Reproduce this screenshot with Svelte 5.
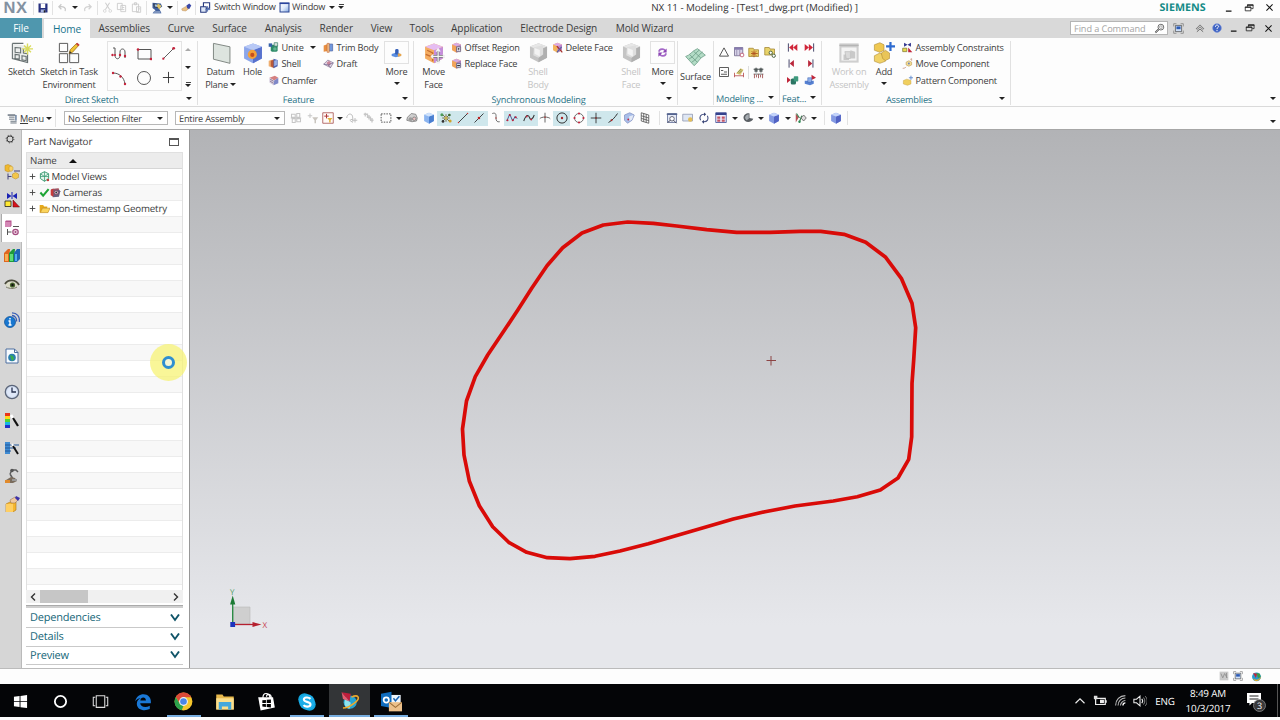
<script>
	// icon shapes, all drawn on a 16x16 grid
	const cube = (top, left, right) => `<path d="M8 1l6.5 2.5v8.500L8 15.500 1.500 12V3.500z" fill="${left}"/><path d="M8 6l6.500-2.500V12L8 15.500z" fill="${right}"/><path d="M8 1l6.500 2.500L8 6 1.500 3.500z" fill="${top}"/>`;
	const dot = (x, y, r = 1.2, c = '#c4233c') => `<circle cx="${x}" cy="${y}" r="${r}" fill="${c}"/>`;
	const line = (d, c = '#444', w = 1) => `<path d="${d}" fill="none" stroke="${c}" stroke-width="${w}"/>`;

	const icons = {
		save: '<path d="M2 2h12v12H2z" fill="#27307f"/><path d="M5 2h6v6H5z" fill="#fff"/><path d="M5 10h6v4H5z" fill="#a8b5df"/><path d="M9 11h2v3H9z" fill="#222"/>',
		undo: line('M13 13c2-5-2-8-9-7M7 2L3 6l4 4', '#c9c9c9', 2),
		redo: line('M3 13c-2-5 2-8 9-7M9 2l4 4-4 4', '#d2d2d2', 2),
		cut: line('M5 1l6 10M11 1L5 11', '#cfcfcf', 1.5) + '<circle cx="4" cy="13" r="2" fill="none" stroke="#cfcfcf"/><circle cx="12" cy="13" r="2" fill="none" stroke="#cfcfcf"/>',
		copy: line('M2 2h7v9H2zM7 5h7v9H7zM9 8h3M9 11h3', '#cbcbcb', 1.3),
		paste: line('M2 3h9v11H2zM5 1h3v3H5zM8 7h6v8H8zM10 10h3', '#cbcbcb', 1.3),
		camera: '<path d="M2 1l11 1 2 4-4 3 3 6H2l4-4-4-3z" fill="#3f5f9c"/><path d="M3 2l7 1v5L4 7z" fill="#2c3646"/><path d="M5 3l4 .5v3L5 6z" fill="#a6c6ea"/><path d="M9 2l5 3-3 5-3-4z" fill="#dfc468"/><path d="M4 12h8l1 3H3z" fill="#7d93bd"/>',
		eraser: '<path d="M1 10l7-4 4 3-5 4-5-.500z" fill="#edc384" stroke="#a87b48" stroke-width=".6"/><path d="M8 5l4-3 3 3-3 5-3-1z" fill="#3a48a8"/>',
		switch: line('M5 1h9v8H5z', '#26387e', 1.6) + '<path d="M1 7h8v8H1z" fill="#dce6f6" stroke="#26387e" stroke-width="1.500"/>' + line('M11 6v8M8 11h7', '#5474b8', 1.4),
		window: '<defs><linearGradient id="wg" x1="0" y1="0" x2="1" y2="1"><stop offset="0" stop-color="#fff"/><stop offset=".5" stop-color="#dfeafb"/><stop offset="1" stop-color="#7fa4dd"/></linearGradient></defs><path d="M1.500 1.500h13v13h-13z" fill="url(#wg)" stroke="#2c4794" stroke-width="1.500"/><path d="M1 1h14v2H1z" fill="#2a449e"/>',
		sketch: '<path d="M1 1l12 2v12L1 12z" fill="#eceeed"/>' + line('M1 1h8M1 1v11l11 3V9M3 4l4 .4v3.600L3 7.500zM9 5v3l3 .5M3 9l3 .4v3L3 12zM8 10l3 .6v3L8 13z', '#687172', .8) + line('M12 1v8M8 5h8M9.500 2.500l5 5M14.500 2.500l-5 5', '#d9db5c', 1),
		task: line('M1 1h6v6H1zM1 8.500h6V15H1zM8.500 8.500H15V15H8.500z', '#555', .7) + '<path d="M8 8.500l1-3L13.500 1 15 2.500l-4.500 5z" fill="#f0c434" stroke="#a4751d" stroke-width=".6"/><path d="M13 1.500L14 .5 15.700 2l-1 1z" fill="#c43d3d"/><path d="M8 8.500l.6-2 1.300 1.400z" fill="#333"/>',
		studio: line('M2 2h2v7c0 5 5 5 5 0V6c0-4 5-4 5 0v6', '#555') + dot(1.500, 9) + dot(4, 9, 1) + dot(9, 9) + dot(14, 10),
		rect: line('M2 3.500h13v9.500H2z', '#555') + dot(2, 3.500, 1.3) + dot(15, 13, 1.3),
		line: line('M2 14L14 2', '#555') + dot(2.500, 13.500) + dot(13.500, 2.500, 1.5),
		arc: line('M2 3c6 0 11 4 12 11', '#555') + dot(2, 3) + dot(9.500, 6.500) + dot(14, 14),
		circle: '<circle cx="8" cy="8" r="6.500" fill="none" stroke="#444" stroke-width=".9"/>',
		plus: line('M8 2v12M2 8h12', '#333', 1),
		datum: '<path d="M2.500 1L14.500 3.500V15.500L2.500 12.500z" fill="#dde4df" stroke="#7e8581" stroke-width=".7"/>',
		hole: cube('#b8c9f6', '#8ca6ea', '#5872cd') + '<circle cx="7.500" cy="9" r="3.300" fill="#f4a13a"/><circle cx="7.500" cy="9.400" r="1.500" fill="#c84e1e"/>',
		unite: '<rect x="4" y="4" width="10" height="10" rx="2" fill="#2e8b68"/><path d="M1 2h5v5H1z" fill="#3561a8"/><path d="M9 1h5v5H9z" fill="#d6e2de" stroke="#3b7f67"/><circle cx="10" cy="10" r="2.500" fill="#63b593"/>',
		shell: '<path d="M1 4l6-2v12l-6-2z" fill="#efae70"/><path d="M4 4l5-2v13l-5-3z" fill="#b85a3c"/><path d="M8 1l6 2v9l-6 3z" fill="#4b62b4"/><path d="M9 4l4-1v7l-4 2z" fill="#9db3e8"/>',
		chamfer: '<path d="M2 4l8-3 5 3-6 4z" fill="#d58080"/><path d="M2 4l7 4-1 7-6-4z" fill="#d4cadc"/><path d="M9 8l6-4v8l-7 3z" fill="#7f88c8"/>' + line('M3 6l5 3M3 9l5 3', '#79627c'),
		trim: '<path d="M1 5l6-2v10l-6 1z" fill="#e88f42"/><path d="M8 3h6v10H8z" fill="#7198dd" stroke="#4a63a4"/><path d="M6 2h3v13H6z" fill="#f2c795" stroke="#c05d26" stroke-width=".8"/>',
		draft: '<path d="M1 9l6-6 8 4-4 7z" fill="#e4dde9" stroke="#846f91"/><path d="M5 7l4-3 3 4-4 4z" fill="#c8849a"/>' + line('M1 9l7 1 7-3M8 10l3 4', '#6f648d'),
		moreBody: '<path d="M1 10l7-2 6 2v3l-7 2-6-2z" fill="#5b8fe2"/><rect x="6" y="3" width="5" height="8" rx="2" fill="#3560b8"/><path d="M10 9l5 1v3l-5 1z" fill="#e7a64d"/>',
		moveFace: cube('#e6bdf2', '#f4ad62', '#c48ddc') + line('M3 6l4 2v6M2 9l5 2', '#c76e31') + line('M11 6v9M6.500 10.500h9', '#777', 2) + line('M11 5.500v10M6 10.500h10M9.500 7L11 5l1.500 2M9.500 14l1.500 2 1.500-2M7.500 9L6 10.500 7.500 12M14.500 9l1.500 1.500-1.500 1.500', '#f4f4f4', .9),
		offset: cube('#d9abe3', '#f2a45a', '#b58cc6') + '<path d="M8 7h6v7H8z" fill="#ddd9e8" stroke="#5f546d"/>' + line('M11 12V9M9.500 10.500L11 9l1.500 1.500', '#333'),
		replace: cube('#d6a9df', '#f2a45a', '#a87ebd') + '<path d="M8 8h6v6H8z" fill="#cfd8e9" stroke="#5a5a7c"/>' + line('M9 11h4', '#333', 1.6),
		delete: cube('#dca8e5', '#f4b45c', '#bd84cf') + line('M7 6l8 9', '#a5302c', 1.8) + line('M14 7l-7 8', '#56639b', 1.8),
		shellGrey: cube('#e7e7e7', '#c4c4c4', '#b0b0b0') + '<path d="M4.500 4l7-1.500v7L8 12 4 10z" fill="#dedede"/><path d="M5 4.500l4 1.500v5L5 9z" fill="#f3f3f3"/>',
		moreSync: line('M3 7c0-5 8-5 9-1M13 9c0 5-8 5-9 1', '#a468c7', 2.4) + '<path d="M14 2v6H8zM2 14V8h6z" fill="#8c46b5"/>',
		surface: '<path d="M.5 8C4 7 5 4 9.500 2l6 5c-4 1.500-5 5-8.500 8z" fill="#b3dcc6"/>' + line('M.5 8C4 7 5 4 9.500 2l6 5c-4 1.500-5 5-8.500 8zM3 10c4-2 5-5 8-7M5 12.500c4-2 5-6 8.500-8M3.500 6.500l6 6M6.500 4l5.500 5', '#6a9c84', .6),
		triangle: line('M8 2.500l6 11H2z', '#333', 1.1),
		table: '<path d="M2 2h11v11H2z" fill="#d7d2e8" stroke="#6a6186"/><path d="M2 2h11v3H2z" fill="#877bb0"/>' + line('M5 5v8M9 5v8', '#8d84a5') + '<circle cx="12" cy="12" r="2.500" fill="#fff" stroke="#b94763"/>',
		folderStar: '<path d="M1 3h6l1 2h6v9H1z" fill="#e6cc62" stroke="#a18431"/>' + line('M8 6v9M4 10h9M5 7l6 6M11 7l-6 6', '#b0531f', 1.2),
		folderLink: '<path d="M1 2h6l1 2h6v8H1z" fill="#e8d369" stroke="#a18431"/><circle cx="9" cy="9" r="2.200" fill="#fff" stroke="#4c6340" stroke-width="1.300"/><circle cx="13" cy="13" r="2.200" fill="#fff" stroke="#4c6340" stroke-width="1.300"/>',
		note: line('M2 2h12v12H2zM4 6h3M4 11h8M8 8h4', '#3c3c3c', 1.1),
		measure: '<path d="M4 10l6-7 4 2-4 7z" fill="#e3c874"/>' + line('M2 9v6M14 9v6M2 13h12', '#b13c3c') + line('M6 9l5-5M8 10l4-4', '#557c4c'),
		weight: '<path d="M3 3h4v4H3zM9 3h4v4H9z" fill="#6c7373"/>' + line('M2 4h12M5 2v6M11 2v6', '#4c5353', 1.2) + line('M2 10h12', '#555', 1) + line('M3 10v5M5.500 11v3M8 10v5M10.500 11v3M13 10v5', '#9a4545', 1),
		first: line('M2 2v12', '#33335a', 1.3) + '<path d="M9 3v10L3 8zM15 3v10L9 8z" fill="#d0263a"/>',
		last: line('M14 2v12', '#33335a', 1.3) + '<path d="M1 3v10l6-5zM7 3v10l6-5z" fill="#d0263a"/>',
		prev: line('M3 2v12', '#33335a', 1.3) + '<path d="M10 3v10L4 8z" fill="#b9263a"/>',
		next: line('M13 2v12', '#33335a', 1.3) + '<path d="M6 3v10l6-5z" fill="#b9263a"/>',
		playGreen: '<path d="M0 4v8l5-4z" fill="#c0263a"/><rect x="5" y="6" width="7" height="8" rx="2" fill="#2b7563"/><rect x="9" y="3" width="6" height="7" rx="1" fill="#3e997d"/>',
		playBlue: '<path d="M10 1v7l6-3z" fill="#c0263a"/><path d="M1 9h12v4l-5 2-7-2z" fill="#5580d2"/><path d="M5 5h5v6H5z" fill="#8fb0ea" stroke="#3b5fae" stroke-width=".7"/>',
		work: '<path d="M1 1h14v14H1z" fill="#cfcfcf"/><path d="M2.500 4h11v9.500h-11z" fill="#f4f4f4"/><path d="M4 9h4v4H4zM9 6l3.500 1v5L9 12z" fill="#c9c9c9"/><path d="M5 7h4v5H6z" fill="#dadada" stroke="#bbb" stroke-width=".5"/>' + line('M1 2.500h14', '#b5b5b5', 1),
		add: '<path d="M1 2l4-1.500L8 2v4L5 7.500 1 6z" fill="#efc851" stroke="#a8842d" stroke-width=".4"/><path d="M1 10l4-2 4 2v4l-4 1.500L1 14z" fill="#f1d267" stroke="#a8842d" stroke-width=".4"/><path d="M6 8l3-2 3 2v4l-3 1.500L7 12z" fill="#e9c558" stroke="#a8842d" stroke-width=".4"/>' + line('M12.700 0v6.500M9.500 3.200h6.500', '#2d6bd0', 1.6),
		constraint: '<path d="M3 1v6l5-3 5 3V1L8 4z" fill="#31358e"/><path d="M1 9h6v5H1z" fill="#e8d94d" stroke="#77702a"/><path d="M9 8v7h6z" fill="#c0263a"/>',
		moveComp: '<path d="M6 6l4-2 4 2v4l-4 2-4-2z" fill="#f3dc94" stroke="#b8944b" stroke-width=".8"/>' + line('M1 15c3 0 4-1 5-2M12 2l2-1v3', '#c0806a') + dot(10, 8, 1.4, '#6d84bb'),
		patternComp: '<path d="M2 8l5-2 6 2v5l-5 2-6-2z" fill="#f0cf5e" stroke="#c29a36" stroke-width=".6"/>' + line('M13 1v6M10 4h6', '#5c88cd', 1.3),
		menu: '<path d="M1 2h11v2H1z" fill="#5c6774"/>' + line('M3 6h8M3 9h8M5 12h9M5 14.500h9', '#5c6774', 1.3) + line('M13 3v8', '#36557e', 1.6),
		ghost: line('M2 3h5v4H2zM9 2h4v5H9zM3 9h4v5H3zM9 9h5v4H9zM1 8h14', '#c6c6c6', 1.4),
		ghostFilter: line('M1 5h6M4 2v6', '#c8c8c8', 1.4) + '<path d="M7 7h8l-3 4v4h-2v-4z" fill="#c9c5bf"/>',
		filter: '<path d="M1 1h14v14H1z" fill="#fffaf7" stroke="#a04444"/>' + line('M3 5.500h6M6 2.500v6', '#b03737', 1.3) + '<path d="M7 8h7l-2.500 3v3h-2v-3z" fill="#e0b13b"/>',
		ghostMove: line('M1 8c0-6 8-8 8 0v5M9 10h-3M5 11l4 3M9 11h6M12 8v6', '#bdbdbd', 1.3),
		ghostSteps: line('M1 3h5v4h4v4h4M3 1v5M8 4v6M12 8v6', '#c6c6c6', 1.7),
		dashed: '<rect x="1.500" y="2.500" width="13" height="11" fill="none" stroke="#444" stroke-width="1.200" stroke-dasharray="2 1.500"/>',
		wire: '<path d="M1 11l1-4 5-5 6 1 2 5-1 4-6 1z" fill="#cfcfcf" stroke="#777"/><circle cx="6" cy="9.500" r="2.600" fill="#9d9d9d"/><circle cx="11" cy="9" r="2.300" fill="#ecc4c4" stroke="#777"/>',
		blueCube: cube('#cfe2fb', '#8cb5f0', '#4a7fd0'),
		violetCube: cube('#c4d4fa', '#8399e2', '#5263c4'),
		snap: line('M8 3v10M3 8h10M4 4l8 8M12 4l-8 8', '#6d633a', 1.2) + dot(2.500, 3.500, 2, '#4c9a58') + dot(13.500, 12, 2, '#cfa329') + dot(12.500, 4, 1.8, '#3c6b35') + dot(4, 12.500, 1.8, '#333') + dot(8, 8, 2, '#c9b24a'),
		snapLine: line('M2 14L14 2', '#222', 1.1) + dot(14, 2, 1, '#c33') + dot(2, 14, 1, '#c33'),
		snapMid: line('M2 14L14 2', '#222', 1.1) + dot(8, 8, 1.7, '#b22'),
		hook: line('M3 2c6-2 5 3 5 6s1 6 5 5', '#555', 1.1) + dot(8, 8, .9, '#b33'),
		poly: line('M1 12l4-9 4 9 3-6 3 3', '#2f3a7e', 1.1) + dot(5, 4, 1.3) + dot(9, 11, 1.3) + dot(2, 11, 1.3) + dot(13, 7, 1.3),
		spline: line('M1 12c4-11 7-7 8-4s4 2 6-4', '#333', 1.4) + dot(5, 6, 1.2) + dot(11, 10, 1.2),
		cross: line('M8 1v13M1 9c2-3 12-3 14 0', '#555', 1.2) + dot(8, 7, 1, '#b33'),
		center: '<circle cx="8" cy="8" r="6.800" fill="none" stroke="#222" stroke-width="1.200"/>' + dot(8, 8, 1.6, '#a22'),
		quadrant: '<circle cx="8" cy="8" r="6" fill="none" stroke="#555" stroke-width="1.100"/>' + dot(8, 2, 1.4) + dot(8, 14, 1.4) + dot(2, 8, 1.4) + dot(14, 8, 1.4),
		plusSnap: line('M8 1v14M1 8h14', '#222', 1.1) + dot(8, 8, 1, '#a22'),
		onCurve: line('M2 14c5-3 8-6 12-12', '#222', 1.2) + dot(6, 11, 1.3, '#a22'),
		faceSnap: '<path d="M2 4l7-3 6 3-3 7-6 4-4-4z" fill="#a9bfea" stroke="#8593c2"/><path d="M8 6l6-2-2 6-3 2z" fill="#e4eaf6"/>' + dot(7, 10, 1.2),
		grid: line('M3 1l10 3v11L3 12zM6.300 2v11M9.600 3v11M3 5l10 3M3 8.500l10 3', '#555', 1.1),
		fit: '<path d="M2 2h12v12H2z" fill="#e5eaf6" stroke="#55648f"/><path d="M1 2h14v2H1z" fill="#55648f"/><circle cx="8" cy="9" r="3" fill="#fff" stroke="#445" />' + line('M10 11l4 4M6 11l-4 3', '#445', 1.2),
		zoomWin: '<path d="M1 3h13v9H1z" fill="#dfe7f4" stroke="#8993ac"/>' + dot(11, 10, 3, '#e3bd58'),
		rotate: line('M3.500 11C1 6 4 3 8 3M12.500 5c2.500 5-.5 8-4.500 8', '#4a5585', 1.5) + '<path d="M8 .5l3 2.500-3 2.500zM8 10.500L5 13l3 2.500z" fill="#3a4575"/>',
		views: '<path d="M1 1h14v13H1z" fill="#eef" stroke="#34428d"/><path d="M1 1h14v3H1z" fill="#34428d"/><path d="M3 6h4v3H3zM9 6h4v3H9zM3 10h4v3H3zM9 10h4v3H9z" fill="#c55664"/>',
		section: '<path d="M2 8c0-5 5-7 8-6v6l5 1c-1 5-12 7-13-1z" fill="#5a5f64"/><path d="M4 8c0-3 3-5 5-5v6l-3 2z" fill="#a5abb0"/>',
		path: '<path d="M1 2l4 5-4 7z" fill="#b85258"/>' + line('M2 2l4 6M6 13l3-8', '#3a8252', 1.5) + '<path d="M11.500 4l3.500 4-3.500 4L8 8z" fill="#ddd" stroke="#555"/>' + dot(6, 13, 1.6, '#2f8a55'),
		search: '<circle cx="10" cy="6" r="4.200" fill="none" stroke="#444" stroke-width="1.100"/><circle cx="10" cy="6" r="2" fill="none" stroke="#666" stroke-width=".8"/>' + line('M7 9l-5 5', '#444', 2.4) + line('M7 9l-5 5', '#fff', .8),
		screen: line('M1 5V1h4M11 1h4v4M15 11v4h-4M5 15H1v-4', '#777', 1) + '<path d="M3.500 3.500h9v9h-9z" fill="#cfe0f8" stroke="#444"/><path d="M5 5h6v4H5z" fill="#2d5bb4"/>',
		collapse: line('M2 9l6-6 6 6-2 1-4-4-4 4z', '#444', 1) + line('M3 14l5-4.500 5 4.500', '#444', 1.2),
		help: '<circle cx="8" cy="8" r="7" fill="#3f64c4" stroke="#7f95d8"/>' + line('M5.500 6c0-4 5.500-3 5 0-.3 1.500-2.500 1.500-2.500 3.500M8 11v2', '#fff', 1.6),
		min: line('M3 13h9', '#111', 2),
		restore: line('M5.500 6V3h9v6h-3M2 6.500h9v6H2z', '#222', 1.3) + line('M5 3.300h10M1.500 6.800H11.500', '#222', 1.8),
		close: line('M2.500 2.500l11 11M13.500 2.500l-11 11', '#111', 1.8),
		// resource bar
		gear: '<circle cx="8" cy="8" r="4.800" fill="none" stroke="#333" stroke-width="1.500"/><circle cx="8" cy="8" r="6.200" fill="none" stroke="#333" stroke-width="1.400" stroke-dasharray="2 2.860"/>',
		assemblyNav: '<path d="M1 1.500l3-1L7.500 2v4.500L4 8 1 6.500z" fill="#f0b92e" stroke="#b98a23" stroke-width=".5"/><path d="M5 3l2-1 2 1v3L7 7.500 5 6z" fill="#f7d268" stroke="#b98a23" stroke-width=".4"/><path d="M8.500 10l3-1.500 3 1.500v3.500l-3 1.500-3-1.500z" fill="#f3c64a" stroke="#b98a23" stroke-width=".5"/>' + line('M4 9.500v6M4 12.500h3.500M10 7h6', '#43437c', 1),
		constraintNav: '<path d="M3 1v6l4.500-3zM13 1v6L8.500 4z" fill="#1c24b4"/>' + line('M8 0v7', '#1c24b4') + '<path d="M1 9h6v5.500H1z" fill="#ffe832" stroke="#222" stroke-width=".8"/><path d="M9 8v7h6.500z" fill="#d7121c" stroke="#500" stroke-width=".5"/>',
		partNav: '<path d="M1 1.500L2 .500h5.500v5L6.500 7H1z" fill="#b5578f"/><path d="M1 2h5.500v5H1z" fill="#d487b5"/>' + line('M9 6.500h6M3.500 9v6M3.500 12h4', '#555') + '<circle cx="11.500" cy="12" r="2.700" fill="#f3d9e8" stroke="#a24a7f" stroke-width="1.200"/>' + dot(11.500, 12, 1, '#a24a7f'),
		books: '<path d="M0 5l4-4h2L5 14H0z" fill="#e0651f"/><path d="M1 6h3v7H1z" fill="#f7b054"/><path d="M5 5l4-4h2l-1 13H5z" fill="#1f9a3c"/><path d="M6 6h3v7H6z" fill="#5ede77"/><path d="M10 5l3-4h3v10l-3 3h-3z" fill="#1f66b4"/><path d="M11 6h2v7h-2z" fill="#4faef0"/>',
		eye: '<path d="M1 9c3-5 11-5 14 0-4 4-11 3-14 0z" fill="#dcdcc8"/><path d="M1 8c3-5 11-5 14 1" fill="none" stroke="#4b4b3c" stroke-width="1.800"/>' + line('M2 11c4 2 8 2 11 0', '#7d7d66') + dot(8.500, 9, 2.6, '#46632c') + dot(8.500, 9, 1.2, '#111'),
		info: '<circle cx="6" cy="10" r="5.500" fill="#1877d0" stroke="#0d4e94" stroke-width=".7"/>' + line('M4.500 9H6v4M4.500 13h3M6 6v1.600', '#fff', 1.4) + line('M8 3.500c3 0 5 3 4.500 6M8 .8c5 0 8 4 7.300 9', '#3a5fb6', 1.3),
		page: '<path d="M2 1h8.500L14 4.500V15H2z" fill="#f7fbff" stroke="#4d6fa0"/>' + line('M10.500 1v3.500H14', '#4d6fa0') + '<circle cx="8" cy="9.500" r="3.800" fill="#2a7fae"/><path d="M6 7l3 1 1 3-2 2-1-3z" fill="#39b04a"/>',
		clock: '<circle cx="8" cy="8" r="6.700" fill="#cfdcf0" stroke="#5b6579" stroke-width="1.300"/><circle cx="8" cy="8" r="5" fill="#dfe8f8"/>' + line('M8 3.500V8h4', '#26304e', 1.3),
		palette: '<path d="M1 1h5v3H1z" fill="#e8331b"/><path d="M1 4h5v3H1z" fill="#ffd51e"/><path d="M1 7h5v3H1z" fill="#4fd433"/><path d="M1 10h5v3H1z" fill="#17b6e3"/><path d="M1 13h5v3H1z" fill="#2130c9"/>' + line('M7 3l3 5', '#fff', 2.6) + line('M9 6l5 8', '#111', 2.200),
		wizard: '<path d="M1 2h5v12H1z" fill="#3f8bd2"/>' + line('M1 5h14M1 8h11M1 11h6', '#23599a', 1.1) + line('M8 4l2 3', '#fff', 2.200) + line('M9 6l5 8', '#111', 1.900),
		robot: line('M6 6l2-4 4 0 2 2M6 6l3 5', '#5c5c5c', 1.5) + dot(8, 2.500, 1.800, '#555') + '<path d="M2 12l5-3 4 1 2 3-4 2H2z" fill="#7a6c5d"/><path d="M1 12h5v3H1z" fill="#e08a2c"/><path d="M8 11h5v2H8z" fill="#999"/>',
		parcel: '<path d="M2 8l4-2h6v8l-3 2H2z" fill="#f5b62f" stroke="#b27512" stroke-width=".6"/><path d="M2 8h7v8H2z" fill="#ffcf62"/><path d="M6 4l5-3 3 3-3 3H7z" fill="#f0c8a0" stroke="#8e6a46" stroke-width=".5"/><path d="M12 0l4 2-2 3-3-3z" fill="#3d33a8"/>',
		// tree
		expand: line('M8 3v10M3 8h10', '#444', 1.6),
		model: '<path d="M8 1l6 3v7l-6 4-6-4V4z" fill="#e4f4ec" stroke="#3b9a73" stroke-width="1.400"/>' + line('M8 1v14M2 4l6 4 6-4M2 8h12', '#3b9a73', 1.1) + dot(13, 13, 1.8, '#c03a3a'),
		check: line('M2 8l4 4.500L14 3', '#1ea435', 3),
		cameras: '<path d="M2 3l10-1 3 4-2 8-9 1z" fill="#646180"/><path d="M1 4l4-2v12l-4-2z" fill="#c83a3a"/><path d="M4 3l9-1v1.500H4z" fill="#d04848"/>' + '<circle cx="9" cy="8" r="3" fill="#cfd2e0" stroke="#8a3048"/>' + dot(9, 8, 1.3, '#333'),
		folder: '<path d="M1 3h5l1.500 2H12v3H5l-3 6H1z" fill="#e5a91c"/><path d="M5 7.500h11L13 14H2z" fill="#fbd45c" stroke="#b37d10" stroke-width=".8"/>',
		// status bar and task bar
		statusGrey: '<path d="M1 1h14v14H1z" fill="#c9c9c9"/>' + line('M3 4l3 7 3-7 4 7M12 3v8', '#8d8d8d', 1.3),
		globe: '<circle cx="8" cy="8.500" r="6.500" fill="#2a9bd0"/><path d="M3 3l6 1-2 6z" fill="#c0263a"/><path d="M8 3l5 1 1 5-4 1z" fill="#3b9a45"/><path d="M3 11c4 3 8 2 12-3-1 6-9 10-12 3z" fill="#e4ad2e"/>',
		start: '<path d="M1 3l6-.9v5.500H1zM8 2l7-1v6.600H8zM1 8.400h6v5.500L1 13zM8 8.400h7V15l-7-1z" fill="#fff"/>',
		cortana: '<circle cx="8" cy="8" r="5.300" fill="none" stroke="#fff" stroke-width="1.700"/>',
		taskView: line('M4 2.500h8v11H4zM3 4H1.200v8H3M13 4h1.800v8H13', '#ddd', 1),
		edge: '<path d="M1 7.500C2 3 5 1 8.500 1c4 0 6.500 3 6.500 6.500V9H5.500c.2 3 4.500 4.500 8.500 2.300v3C9 16.500 2.500 15 2.500 9.500c0-2.500 1.500-4 3.500-5C3.500 4.800 2 6 1 7.500zM5.600 6.600h5c0-3.600-4.600-3.600-5 0z" fill="#1a78d6"/>',
		chrome: '<circle cx="8" cy="8" r="7.500" fill="#f5c62c"/><path d="M1.500 4.200A7.500 7.500 0 0 1 14.600 4.500H8L4.800 9.500z" fill="#dc4a38"/><path d="M1.500 4.200L5 10l3 1.500-1.500 3.900A7.500 7.500 0 0 1 1.500 4.200z" fill="#2ba24c"/><circle cx="8" cy="8" r="3.700" fill="#f3f3f3"/><circle cx="8" cy="8" r="2.800" fill="#4a86e8"/>',
		explorer: '<path d="M1 2h5l1 1.500h8V14H1z" fill="#e8b94c"/><path d="M1 5h14v9H1z" fill="#fbdf8c"/><path d="M3 8h10v6h-2.500v-2.500h-5V14H3z" fill="#43a7dc"/>',
		store: line('M5 5c0-5 5-5 6 0M8 4c0-3 4-3 4 1', '#fff', 1) + '<path d="M1 4.500h12.500L15 13l-12 2.500z" fill="#fff"/><path d="M4.500 7l3-.3v2.600h-3zM8.200 6.600l3.500-.3v3H8.200zM4.500 10h3v2.600l-3-.3zM8.200 10h3.500v3l-3.500-.4z" fill="#000"/>',
		skype: '<rect x="1" y="1" width="10" height="10" rx="5" fill="#12a5dd"/><rect x="5" y="5" width="10" height="10" rx="5" fill="#12a5dd"/><circle cx="8" cy="8" r="6.300" fill="#1badE8"/>' + line('M10.800 5.500C9 3.700 5.500 4.200 5.500 6c0 2.500 5.300 1.300 5.300 4 0 2-4 2.300-5.600.5', '#fff', 1.7),
		nx: '<circle cx="8.500" cy="8.500" r="5" fill="#25a5d5"/><path d="M5 6l4 3-1 4.500c-3 0-5-4-3-7.500z" fill="#8fe3ef"/><path d="M2 1l7 1-1 6z" fill="#c11d3c"/><path d="M2 1l6 7-5-2z" fill="#e75d70"/>' + line('M3 13c5 0 13-6 11.500-8.500-1-1.300-3-.8-5 .2', '#eda92b', 1.2),
		outlook: '<path d="M5 3h10v9H5z" fill="#eef5fb"/><path d="M0 2l8-1.500V13L0 11.500z" fill="#0f6cbd"/><circle cx="4" cy="6.800" r="2" fill="none" stroke="#fff" stroke-width="1.300"/>' + line('M9.500 5.500l1.500 2 3-3.500', '#1763b3', 1.1) + '<path d="M6 8.500h10V15.500H6z" fill="#ecc08a"/>' + line('M6 8.500l5 4 5-4', '#9c6e38', .8),
		chevUp: line('M2 11l6-6 6 6', '#eee', 1.5),
		battery: line('M3 5h11v7H3zM15 7v3', '#eee', 1.4) + '<path d="M8 6.500h4.500v4H8z" fill="#eee"/><path d="M1 2h4v4H1z" fill="#ddd"/>',
		wifi: line('M2 14C2 7 7 2 14 2M5 14c0-5 4-9 9-9M8 14c0-3 3-6 6-6', '#bbb', 1.3) + line('M11 14c0-2 1-3 3-3', '#fff', 1.6),
		sound: line('M1 6h3l4-3.500v11L4 10H1z', '#eee', 1.2) + line('M10 5.500c1.300 1.500 1.300 3.500 0 5', '#eee', 1.2) + line('M12 4c2 2.500 2 5.500 0 8M14 2.500c3 3.500 3 7.500 0 11', '#999', 1),
	};

	const tabs = ['File', 'Home', 'Assemblies', 'Curve', 'Surface', 'Analysis', 'Render', 'View', 'Tools', 'Application', 'Electrode Design', 'Mold Wizard'];

	// "|" separator, "v" drop-down arrow, "*" in front marks a switched-on toggle
	const selectionTools = ['ghost', 'ghostFilter', 'filter', 'v', 'ghostMove', 'ghostSteps', 'dashed', 'v', 'wire', 'blueCube', '*snap', '*snapLine', '*snapMid', 'hook', '*poly', '*spline', 'cross', '*center', 'quadrant', '*plusSnap', '*onCurve', 'faceSnap', 'grid', '|', 'fit', 'zoomWin', 'rotate', 'views', 'v', 'section', 'v', 'violetCube', 'v', 'path', 'v', '|', 'violetCube', '|'];

	const resources = ['gear', 'assemblyNav', 'constraintNav', 'partNav', 'books', 'eye', 'info', 'page', 'clock', 'palette', 'wizard', 'robot', 'parcel'];
	const spaced = ['assemblyNav', 'info', 'page', 'clock'];

	const tree = [
		{ label: 'Model Views', icons: ['model'] },
		{ label: 'Cameras', icons: ['check', 'cameras'] },
		{ label: 'Non-timestamp Geometry', icons: ['folder'] },
	];
	const emptyRows = Array(23);

	const sections = ['Dependencies', 'Details', 'Preview'];

	const apps = [
		{ icon: 'start', size: 15 },
		{ icon: 'cortana', size: 17 },
		{ icon: 'taskView', size: 17 },
		{ icon: 'edge', size: 18 },
		{ icon: 'chrome', size: 19, open: true },
		{ icon: 'explorer', size: 20 },
		{ icon: 'store', size: 19 },
		{ icon: 'skype', size: 20, open: true },
		{ icon: 'nx', size: 21, open: true, active: true },
		{ icon: 'outlook', size: 21, open: true },
	];

	const curve = '627.7,222 653.3,223.3 676.7,226 706.7,229.7 736.7,232.3 770,232.3 800,231.3 820.7,231.3 844,234.3 865.7,242.3 885.7,257.3 901.3,278.3 912,303.3 915.7,327.7 913.7,360 912,383.3 911.7,436.7 908.7,459.3 898,478 880.3,490 857.3,496.7 833.3,501 795,506 765,511.7 733.3,519 703.3,527.7 648.3,543.7 620,551 595,556.3 570,558.700 547.3,557.7 526.7,552.3 508.7,542.3 492.7,526.7 479.3,505.7 469.3,481 464,455 462.500,429 466.500,401 475.3,376.7 487.7,355 505,329.3 518.3,309.3 531.7,288.3 547,265.7 562.7,247.7 582,233 603.3,225';
</script>

{#snippet icon(name, size = 12)}
	<svg class="icon" viewBox="0 0 16 16" width={size} height={size}>{@html icons[name]}</svg>
{/snippet}

{#snippet arrow()}
	<i class="arrow"></i>
{/snippet}

{#snippet big(name, lines, size = 20, drop = false)}
	<button class="big">
		<span class="big__icon">{@render icon(name, size)}</span>
		{#each lines as text, i}
			<span class="big__line">{text}{#if drop && i === lines.length - 1 && i > 0}{@render arrow()}{/if}</span>
		{/each}
		{#if drop && lines.length === 1}{@render arrow()}{/if}
	</button>
{/snippet}

{#snippet small(name, text, drop = false)}
	<button class="small">{@render icon(name, 11)}<span>{text}</span>{#if drop}{@render arrow()}{/if}</button>
{/snippet}

<div class="app">
	<header class="titlebar">
		<div class="titlebar__quick">
			<b class="titlebar__nx">NX</b>
			<i class="sep"></i>
			{@render icon('save', 12)}
			<i class="sep"></i>
			{@render icon('undo', 10)}
			{@render arrow()}
			{@render icon('redo', 10)}
			<i class="sep"></i>
			{@render icon('cut', 11)}
			{@render icon('copy', 11)}
			{@render icon('paste', 11)}
			<i class="sep"></i>
			{@render icon('camera', 12)}
			{@render arrow()}
			<i class="sep"></i>
			{@render icon('eraser', 11)}
			<i class="sep"></i>
			{@render icon('switch', 11)}
			<span>Switch Window</span>
			{@render icon('window', 11)}
			<span>Window</span>
			{@render arrow()}
			<i class="arrow arrow--lined"></i>
		</div>
		<p class="titlebar__title">NX 11 - Modeling - [Test1_dwg.prt (Modified) ]</p>
		<div class="titlebar__controls">
			<b>SIEMENS</b>
			{@render icon('min', 10)}
			{@render icon('restore', 10)}
			{@render icon('close', 9)}
		</div>
	</header>

	<nav class="tabs">
		{#each tabs as tab}
			<button class="tabs__tab" class:tabs__tab--file={tab === 'File'} class:tabs__tab--active={tab === 'Home'}>{tab}</button>
		{/each}
		<div class="tabs__tools">
			<div class="tabs__find"><span>Find a Command</span>{@render icon('search', 11)}</div>
			{@render icon('screen', 11)}
			{@render icon('collapse', 10)}
			{@render icon('help', 10)}
			{@render icon('min', 10)}
			{@render icon('restore', 10)}
			{@render icon('close', 9)}
		</div>
	</nav>

	<section class="ribbon">
		<div class="group">
			<div class="group__body direct">
				{@render big('sketch', ['Sketch'], 22)}
				{@render big('task', ['Sketch in Task', 'Environment'], 22)}
				<div class="direct__gallery">
					{@render icon('studio', 16)}
					{@render icon('rect', 16)}
					{@render icon('line', 15)}
					{@render icon('arc', 16)}
					{@render icon('circle', 16)}
					{@render icon('plus', 15)}
				</div>
				<div class="direct__scroll">
					<i class="arrow arrow--up"></i>
					{@render arrow()}
					<i class="arrow arrow--lined"></i>
				</div>
			</div>
			<footer class="group__title">Direct Sketch{@render arrow()}</footer>
		</div>
		<div class="group">
			<div class="group__body feature">
				{@render big('datum', ['Datum', 'Plane'], 22, true)}
				{@render big('hole', ['Hole'], 22)}
				<div class="list">
					{@render small('unite', 'Unite', true)}
					{@render small('shell', 'Shell')}
					{@render small('chamfer', 'Chamfer')}
				</div>
				<div class="list">
					{@render small('trim', 'Trim Body')}
					{@render small('draft', 'Draft')}
				</div>
				<div class="more">{@render big('moreBody', ['More'], 11, true)}</div>
			</div>
			<footer class="group__title">Feature{@render arrow()}</footer>
		</div>
		<div class="group">
			<div class="group__body sync">
				{@render big('moveFace', ['Move', 'Face'], 22)}
				<div class="list">
					{@render small('offset', 'Offset Region')}
					{@render small('replace', 'Replace Face')}
				</div>
				<div class="disabled">{@render big('shellGrey', ['Shell', 'Body'], 21)}</div>
				<div class="list">{@render small('delete', 'Delete Face')}</div>
				<div class="disabled">{@render big('shellGrey', ['Shell', 'Face'], 21)}</div>
				<div class="more">{@render big('moreSync', ['More'], 11, true)}</div>
			</div>
			<footer class="group__title">Synchronous Modeling{@render arrow()}</footer>
		</div>
		<div class="group group--surface">
			{@render big('surface', ['Surface'], 21, true)}
		</div>
		<div class="group">
			<div class="group__body modeling">
				{@render icon('triangle', 12)}
				{@render icon('table', 12)}
				{@render icon('folderStar', 12)}
				{@render icon('folderLink', 12)}
				{@render icon('note', 12)}
				{@render icon('measure', 12)}
				<span class="modeling__wide">{@render icon('weight', 13)}</span>
			</div>
			<footer class="group__title group__title--left">Modeling ...{@render arrow()}</footer>
		</div>
		<div class="group">
			<div class="group__body replay">
				{@render icon('first', 11)}
				{@render icon('last', 11)}
				{@render icon('prev', 11)}
				{@render icon('next', 11)}
				{@render icon('playGreen', 12)}
				{@render icon('playBlue', 12)}
			</div>
			<footer class="group__title group__title--left">Feat...{@render arrow()}</footer>
		</div>
		<div class="group">
			<div class="group__body assemblies">
				<div class="disabled">{@render big('work', ['Work on', 'Assembly'], 22)}</div>
				{@render big('add', ['Add'], 22, true)}
				<div class="list">
					{@render small('constraint', 'Assembly Constraints')}
					{@render small('moveComp', 'Move Component')}
					{@render small('patternComp', 'Pattern Component')}
				</div>
			</div>
			<footer class="group__title">Assemblies{@render arrow()}</footer>
		</div>
		<div class="ribbon__rest">{@render arrow()}</div>
	</section>

	<section class="selection">
		<button class="selection__menu">{@render icon('menu', 11)}<span><u>M</u>enu</span>{@render arrow()}</button>
		<div class="selection__combo">No Selection Filter{@render arrow()}</div>
		<div class="selection__combo">Entire Assembly{@render arrow()}</div>
		<div class="selection__tools">
			{#each selectionTools as tool}
				{#if tool === '|'}
					<i class="sep"></i>
				{:else if tool === 'v'}
					{@render arrow()}
				{:else if tool[0] === '*'}
					<span class="selection__on">{@render icon(tool.slice(1), 12)}</span>
				{:else}
					{@render icon(tool, 12)}
				{/if}
			{/each}
		</div>
		<div class="selection__end">{@render arrow()}</div>
	</section>

	<main class="work">
		<aside class="resources">
			{#each resources as name}
				<button class="resources__item" class:resources__item--gear={name === 'gear'} class:resources__item--spaced={spaced.includes(name)} class:resources__item--active={name === 'partNav'}>
					{@render icon(name, name === 'gear' ? 10 : 16)}
				</button>
			{/each}
		</aside>

		<section class="navigator">
			<header class="navigator__title">Part Navigator<i></i></header>
			<div class="navigator__tree">
				<div class="navigator__head">Name<i class="arrow arrow--sort"></i></div>
				{#each tree as row}
					<div class="navigator__row">
						{@render icon('expand', 9)}
						{#each row.icons as name}{@render icon(name, 11)}{/each}
						<span>{row.label}</span>
					</div>
				{/each}
				{#each emptyRows as _}
					<div class="navigator__row"></div>
				{/each}
			</div>
			<div class="navigator__scroll">
				<svg viewBox="0 0 6 8" width="6" height="8"><path d="M5 .5L1.500 4 5 7.500" /></svg>
				<i></i>
				<svg viewBox="0 0 6 8" width="6" height="8"><path d="M1 .5L4.500 4 1 7.500" /></svg>
			</div>
			<div class="navigator__splitter"></div>
			{#each sections as section}
				<div class="navigator__section">
					{section}
					<svg viewBox="0 0 10 8" width="10" height="8"><path d="M1 .500l4 5.500L9 .500" /></svg>
				</div>
			{/each}
			<!-- busy cursor with its highlight -->
			<div class="cursor"><i></i></div>
		</section>

		<svg class="canvas" viewBox="190 130 1090 538">
			<polygon points={curve} fill="none" stroke="#d90b08" stroke-width="3.700" stroke-linejoin="round" />
			<path d="M771 356v9.500M766.500 360.500h9.500" stroke="#8c4444" stroke-width="1" />
			<path d="M233 607h17v17h-17z" fill="#cfcfcf" stroke="#b9b9b9" stroke-width=".6" />
			<path d="M232.700 624v-22" stroke="#23883c" stroke-width="1.300" />
			<path d="M232.700 595.500l2.600 9h-5.200z" fill="#1d7a35" />
			<path d="M233 624.500h21" stroke="#b5202f" stroke-width="1.300" />
			<path d="M261.500 624.500l-9 2.500v-5z" fill="#b5202f" />
			<path d="M230.300 622h4.800v5h-4.800z" fill="#1c34bd" />
			<text x="229.900" y="595" fill="#4f9a62">Y</text>
			<text x="262.500" y="627.800" fill="#c64351">X</text>
		</svg>
	</main>

	<footer class="status">
		{@render icon('statusGrey', 10)}
		{@render icon('screen', 10)}
		{@render icon('globe', 11)}
	</footer>

	<footer class="taskbar">
		<div class="taskbar__apps">
			{#each apps as app}
				<button class="taskbar__app" class:taskbar__app--open={app.open} class:taskbar__app--active={app.active}>{@render icon(app.icon, app.size)}</button>
			{/each}
		</div>
		<div class="taskbar__tray">
			{@render icon('chevUp', 12)}
			{@render icon('battery', 14)}
			{@render icon('wifi', 13)}
			{@render icon('sound', 14)}
			<span>ENG</span>
			<time>8:49 AM<br />10/3/2017</time>
			<div class="taskbar__notes">
				<svg viewBox="0 0 20 20" width="20" height="20">
					<path d="M1 1h14v10H6l-2.500 2.500V11H1z" fill="#fff" />
					<path d="M3.500 4h9M3.500 7h9" stroke="#222" />
					<circle cx="13.500" cy="13.500" r="6" fill="#39393b" stroke="#999" stroke-width=".7" />
					<text x="11" y="17" fill="#fff">3</text>
				</svg>
			</div>
		</div>
	</footer>
</div>

<style>
	:global(body) {
		margin: 0;
		background: #fff;
	}
	.app {
		width: 1280px;
		height: 720px;
		display: flex;
		flex-direction: column;
		overflow: hidden;
		background: #fdfdfd;
		color: #3c3c3c;
		font-family: "Open Sans", "Noto Sans", sans-serif;
		font-size: 9.2px;
		letter-spacing: -0.2px;
		text-rendering: geometricPrecision;
		white-space: nowrap;
	}
	button {
		padding: 0;
		border: none;
		background: none;
		color: inherit;
		font: inherit;
		letter-spacing: inherit;
	}
	p {
		margin: 0;
	}
	.icon {
		display: block;
		flex: none;
	}
	.arrow {
		display: block;
		flex: none;
		width: 0;
		height: 0;
		border: 3px solid transparent;
		border-top: 3px solid #222;
		border-bottom: none;
	}
	.arrow--up {
		border-top: none;
		border-bottom: 3px solid #aaa;
	}
	.arrow--lined {
		position: relative;
	}
	.arrow--lined::before {
		content: "";
		position: absolute;
		left: -2.5px;
		top: -5px;
		width: 5px;
		height: 1px;
		background: #444;
	}
	.arrow--sort {
		border: 4px solid transparent;
		border-top: none;
		border-bottom: 4px solid #111;
	}
	.sep {
		display: block;
		width: 1px;
		height: 14px;
		background: #e2e2e2;
	}

	.titlebar {
		height: 18px;
		display: grid;
		grid-template-columns: 500px 509px 271px;
		align-items: start;
	}
	.titlebar__quick {
		display: grid;
		grid-template-columns: 31px 4px 15px 4px 15px 12px 13px 6px 14px 15px 15px 5px 16px 10px 5px 13px 4px 17px 63px 15px 35px 10px 8px;
		height: 14px;
		align-items: center;
		justify-items: center;
	}
	.titlebar__quick span {
		justify-self: start;
		letter-spacing: -0.25px;
		line-height: 12px;
		margin-top: -1px;
	}
	.titlebar__nx {
		color: #8391a1;
		font: bold 16.5px/14px "Liberation Sans", sans-serif;
		letter-spacing: 0.5px;
		padding-top: 1px;
	}
	.titlebar__title {
		text-align: center;
		font-size: 9.9px;
		letter-spacing: -0.05px;
		line-height: 15px;
		color: #333;
	}
	.titlebar__controls {
		display: grid;
		grid-template-columns: 148px 62px 20px 20px 20px;
		height: 15px;
		align-items: center;
		justify-items: center;
	}
	.titlebar__controls b {
		grid-column: 1 / 3;
		margin-left: 137px;
		color: #128a86;
		font-size: 10.7px;
		letter-spacing: 0;
	}

	.tabs {
		height: 20px;
		display: grid;
		grid-template-columns: 42px 48px 68.5px 45px 52px 55.5px 50.5px 40px 40.5px 69.5px 94.5px 77px 1fr;
		background: #d9d9d9;
		font-size: 10.1px;
		letter-spacing: -0.13px;
	}
	.tabs__tab--file {
		background: #4f97ae;
		color: #fff;
	}
	.tabs__tab--active {
		margin-top: 1px;
		margin-left: 2px;
		background: #fdfdfd;
		color: #17738c;
	}
	.tabs__tools {
		display: grid;
		grid-template-columns: 98px 25px 17px 18px 15px 18px 18px 3px;
		justify-content: end;
		align-items: center;
		justify-items: center;
	}
	.tabs__find {
		width: 98px;
		height: 14px;
		display: flex;
		align-items: center;
		justify-content: space-between;
		box-sizing: border-box;
		margin-left: 4px;
		padding: 0 2px 0 3px;
		border: 1px solid #b5b5b5;
		background: #fff;
		color: #a5a5a5;
		font-size: 9.2px;
		letter-spacing: -0.1px;
	}

	.ribbon {
		height: 68px;
		display: grid;
		grid-template-columns: 198px 216px 264px 36px 66px 42px 189px 1fr;
		border-bottom: 1px solid #dadada;
	}
	.group {
		display: flex;
		flex-direction: column;
		box-sizing: border-box;
		height: 64px;
		margin-top: 3px;
		border-right: 1px solid #e1e1e1;
	}
	.group__body {
		display: grid;
		height: 51px;
		align-items: start;
	}
	.group__title {
		position: relative;
		height: 15px;
		line-height: 18px;
		color: #2a7387;
		text-align: center;
		padding-right: 14px;
	}
	.group__title .arrow {
		position: absolute;
		right: 5px;
		top: 6px;
	}
	.group__title--left {
		padding: 0 0 0 2px;
		text-align: left;
	}
	.big {
		display: flex;
		flex-direction: column;
		align-items: center;
	}
	.big__icon {
		height: 23px;
		display: flex;
		align-items: center;
		justify-content: center;
		margin-bottom: 2px;
	}
	.big__line {
		display: flex;
		align-items: center;
		gap: 2px;
		height: 12.5px;
		line-height: 12.5px;
	}
	.big > .arrow {
		margin-top: 3px;
	}
	.small {
		height: 16.5px;
		display: flex;
		align-items: center;
		gap: 2.5px;
	}
	.small .arrow {
		margin-left: 4px;
	}
	.list {
		margin-top: -2px;
	}
	.more .big__icon {
		width: 23px;
		height: 21px;
		border: 1px solid #e2e2e2;
	}
	.disabled {
		color: #c4c4c4;
	}
	.direct {
		grid-template-columns: 43px 52px 12px 75px 12px;
	}
	.direct__gallery {
		grid-column: 4;
		display: grid;
		grid-template-columns: repeat(3, 24.7px);
		grid-template-rows: 23px 25px;
		align-items: center;
		justify-items: center;
		justify-content: center;
		border: 1px solid #e4e4e4;
		padding-right: 1px;
		box-sizing: border-box;
		height: 50px;
	}
	.direct__scroll {
		height: 46px;
		display: flex;
		flex-direction: column;
		align-items: center;
		justify-content: space-between;
		padding: 7px 0 0;
		box-sizing: border-box;
	}
	.feature {
		grid-template-columns: 45px 17px 55px 62px 31px;
		column-gap: 1px;
		justify-items: center;
	}
	.feature .list {
		justify-self: start;
		margin-left: 6px;
	}
	.feature .list + .list {
		margin-left: 5px;
	}
	.sync {
		grid-template-columns: 37px 71px 30px 63px 30px 33px;
		padding-left: 1px;
		justify-items: center;
	}
	.sync .list {
		justify-self: start;
		margin-left: -1px;
	}
	.group--surface {
		align-items: center;
		padding-top: 4px;
	}
	.group--surface .big__icon {
		margin-bottom: 3px;
	}
	.modeling {
		grid-template-columns: repeat(4, 15.4px);
		grid-template-rows: 20px 20px;
		align-items: center;
		justify-items: center;
		padding: 1px 0 0 2px;
		height: 50px;
	}
	.modeling__wide {
		grid-column: 3 / 5;
		border-left: 1px solid #ddd;
		padding-left: 3px;
		margin-right: 11px;
	}
	.replay {
		grid-template-columns: 17px 17px;
		grid-template-rows: repeat(3, 16.5px);
		align-items: center;
		justify-items: center;
		padding-left: 4px;
		margin-top: -2px;
		height: 53px;
	}
	.assemblies {
		grid-template-columns: 54px 16px 1fr;
		justify-items: center;
	}
	.assemblies .list {
		justify-self: start;
		margin-left: 10px;
	}
	.ribbon__rest {
		display: flex;
		align-items: flex-end;
		justify-content: flex-end;
		padding: 0 4px 6px 0;
	}

	.selection {
		height: 22px;
		display: grid;
		grid-template-columns: 56px 8px 104px 7px 110px 563px 1fr;
		align-items: center;
		border-bottom: 1px solid #a6a6a6;
	}
	.selection__menu {
		height: 18px;
		display: flex;
		align-items: center;
		gap: 2px;
		padding-left: 7px;
		border-right: 1px solid #e2e2e2;
	}
	.selection__combo {
		height: 14px;
		display: flex;
		align-items: center;
		justify-content: space-between;
		box-sizing: border-box;
		padding: 0 4px 0 3px;
		border: 1px solid #b7b7b7;
		background: #fff;
		grid-column: 3;
	}
	.selection__combo + .selection__combo {
		grid-column: 5;
	}
	.selection__tools {
		display: grid;
		grid-template-columns: 21px 14px 15px 9px 16px 17px 18px 8px 18px 16px 17px 17px 16px 17px 16px 18px 14px 19px 15px 19px 15px 17px 16px 12px 14px 17px 16px 18px 9px 17px 9px 18px 9px 17px 9px 13px 10px 12px;
		align-items: center;
		justify-items: center;
	}
	.selection__on {
		padding: 1.5px 2.5px;
		background: #cfe7ec;
	}
	.selection__end {
		display: flex;
		justify-content: flex-end;
		padding: 7px 4px 0 0;
	}

	.work {
		height: 539px;
		display: grid;
		grid-template-columns: 22px 168px 1090px;
		box-sizing: border-box;
		border-bottom: 1px solid #bbb;
	}
	.resources {
		display: flex;
		flex-direction: column;
		background: #d6d6d6;
		border-right: 1px solid #bababa;
	}
	.resources__item {
		height: 28px;
		display: flex;
		align-items: center;
		justify-content: center;
		padding-left: 2px;
	}
	.resources__item--gear {
		height: 20px;
		padding: 0 2px 2px 0;
	}
	.resources__item--spaced {
		margin-top: 8px;
	}
	.resources__item--active {
		margin: 0 -1px 0 1px;
		padding-left: 0;
		background: #fff;
		border-left: 1px solid #aaa;
	}
	.navigator {
		position: relative;
		display: flex;
		flex-direction: column;
		padding: 0 6px 0 4px;
		background: #fff;
		border-right: 1px solid #979797;
	}
	.navigator__title {
		height: 22px;
		display: flex;
		align-items: center;
		justify-content: space-between;
		padding: 1px 4px 0 2px;
		box-sizing: border-box;
		font-size: 9.8px;
		letter-spacing: -0.1px;
	}
	.navigator__title i {
		width: 8px;
		height: 5px;
		border: 1px solid #555;
		border-top-width: 2px;
	}
	.navigator__tree {
		height: 438px;
		border: 1px solid #e0e0e0;
		border-bottom: none;
		box-sizing: border-box;
		letter-spacing: -0.13px;
	}
	.navigator__head {
		height: 16px;
		display: flex;
		align-items: center;
		gap: 12px;
		box-sizing: border-box;
		padding-left: 3px;
		background: #ececec;
		border-bottom: 1px solid #d6d6d6;
		font-size: 9.7px;
	}
	.navigator__row {
		height: 16px;
		display: flex;
		align-items: center;
		gap: 1.5px;
		box-sizing: border-box;
		padding-left: 1px;
		border-bottom: 1px solid #ececec;
		font-size: 9.7px;
	}
	.navigator__row span {
		margin-left: 0.5px;
	}
	.navigator__row .icon + .icon + .icon {
		margin-left: -1px;
	}
	.navigator__row:nth-child(odd) {
		background: #f8f8f8;
	}
	.navigator__scroll {
		height: 13px;
		display: grid;
		grid-template-columns: 14px 48px 1fr 14px;
		align-items: center;
		justify-items: center;
		background: #f0f0f0;
	}
	.navigator__scroll i {
		width: 48px;
		height: 13px;
		background: #c6c6c6;
	}
	.navigator__scroll svg:last-child {
		grid-column: 4;
	}
	.navigator__scroll path {
		fill: none;
		stroke: #333;
		stroke-width: 1.4;
	}
	.navigator__splitter {
		height: 2px;
		margin: 2px 0 1px;
		border-top: 1px solid #aaa;
		background: #cfcfcf;
	}
	.navigator__section {
		height: 17.8px;
		display: flex;
		align-items: center;
		justify-content: space-between;
		padding: 0 3px 0 4px;
		border-bottom: 1px solid #c9c9c9;
		color: #17687a;
		font-size: 11px;
	}
	.navigator__section path {
		fill: none;
		stroke: #0f5468;
		stroke-width: 1.9;
	}
	.cursor {
		position: absolute;
		left: 127.5px;
		top: 214px;
		width: 37px;
		height: 37px;
		display: flex;
		align-items: center;
		justify-content: center;
		border-radius: 50%;
		background: rgba(246, 242, 112, 0.72);
	}
	.cursor i {
		width: 7px;
		height: 7px;
		border: 3.5px solid #2f8fd0;
		border-radius: 50%;
		background: #f4f6d8;
	}
	.canvas {
		display: block;
		width: 1090px;
		height: 538px;
		background: linear-gradient(#b2b3b6, #e6e7eb 92%);
		font-size: 8px;
	}

	.status {
		height: 15px;
		display: flex;
		align-items: center;
		justify-content: flex-end;
		gap: 4px;
		padding: 0 18px 1px 0;
		box-sizing: border-box;
	}
	.status .icon:last-child {
		margin-left: 4px;
	}

	.taskbar {
		height: 33px;
		display: flex;
		justify-content: space-between;
		background: #040507;
		color: #fff;
		font-size: 9.9px;
	}
	.taskbar__apps {
		display: grid;
		grid-template-columns: 40px 40px 40px 46px 35px 47px 36px 46px 39px 44px;
	}
	.taskbar__app {
		display: flex;
		align-items: center;
		justify-content: center;
		box-sizing: border-box;
		padding-top: 2px;
	}
	.taskbar__app--open {
		border-bottom: 2px solid #78aee0;
		padding-top: 4px;
		width: 34px;
		justify-self: center;
	}
	.taskbar__app--active {
		width: 41px;
		background: #333537;
	}
	.taskbar__tray {
		display: grid;
		grid-template-columns: 20px 20px 20px 20px 30px 56px 38px 3px;
		align-items: center;
		justify-items: center;
		text-align: center;
		border-right: 1px solid #555;
		margin-right: 2px;
	}
	.taskbar__tray time {
		line-height: 15px;
	}
	.taskbar__notes {
		padding: 6px 0 0 2px;
	}
	.taskbar__notes text {
		font-size: 9px;
	}
</style>
